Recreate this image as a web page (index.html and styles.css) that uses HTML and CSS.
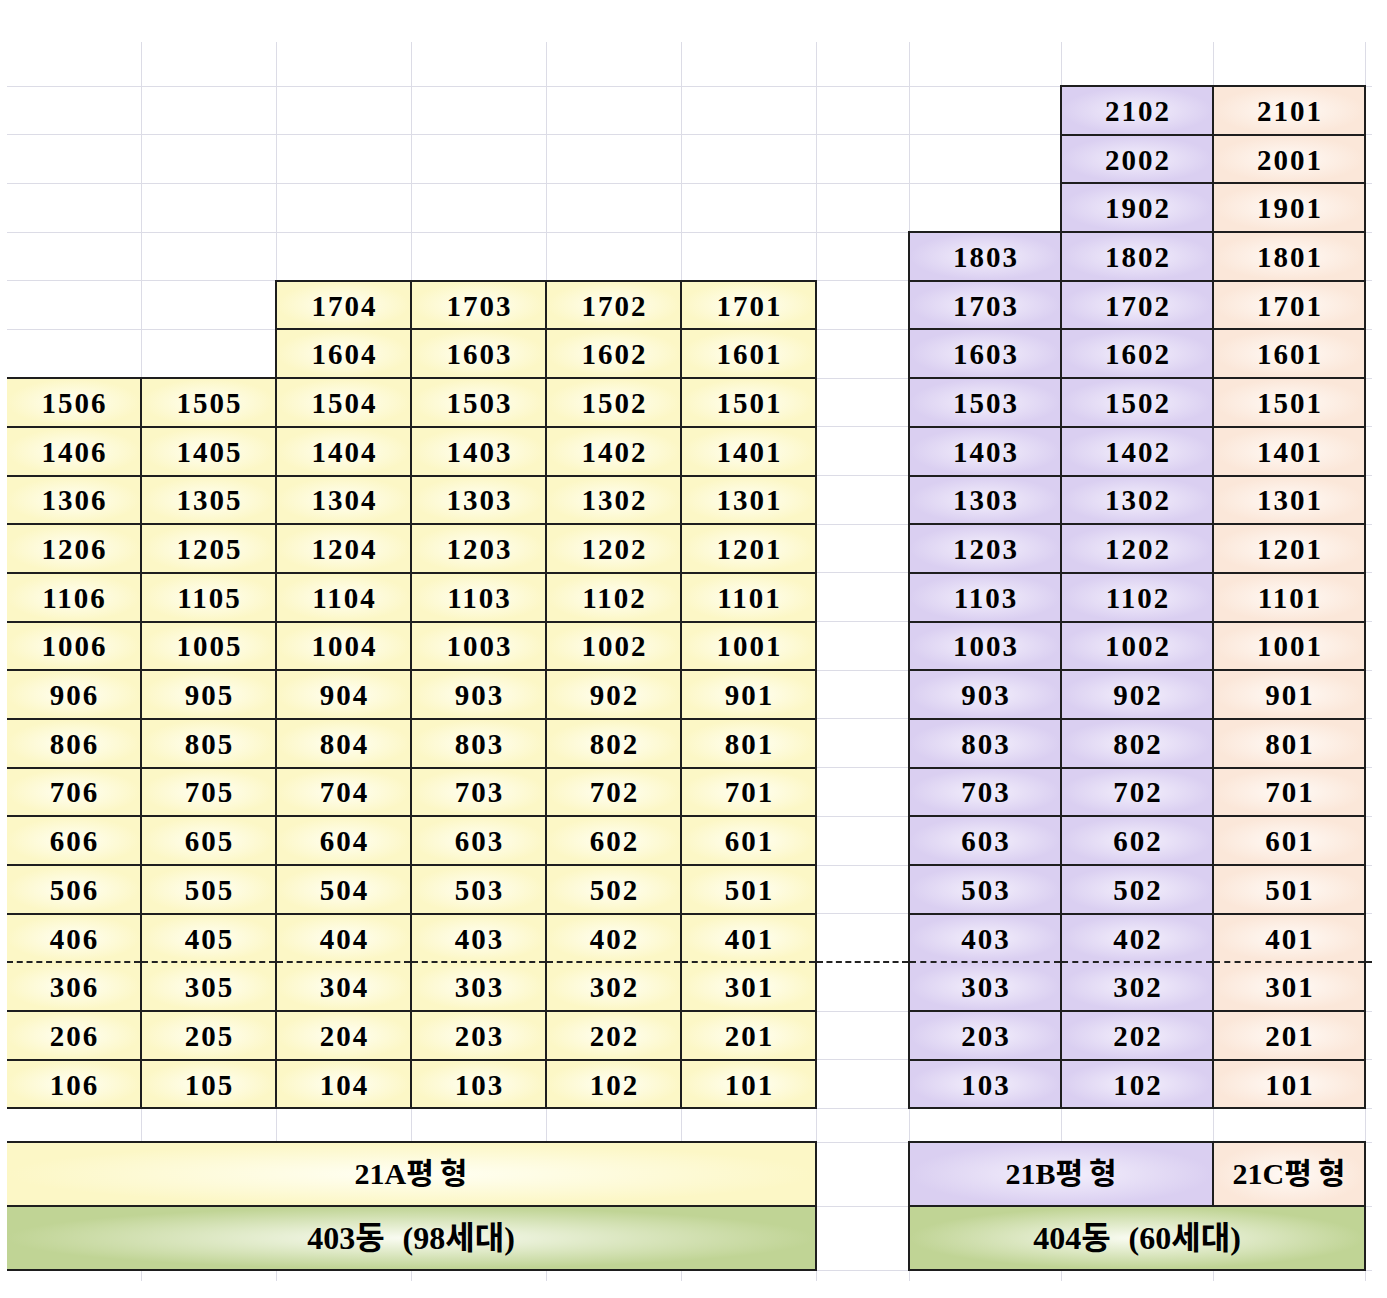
FILE: index.html
```html
<!DOCTYPE html>
<html lang="ko">
<head>
<meta charset="utf-8">
<title>403동 · 404동 세대 배치표</title>
<link rel="stylesheet" href="styles.css">
</head>
<body>
<table class="sheet">
  <colgroup>
    <col class="c134"><col class="c135"><col class="c135"><col class="c135"><col class="c135"><col class="c135">
    <col class="c93"><col class="c152"><col class="c152"><col class="c152"><col class="c7">
  </colgroup>
  <tr class="head"><td></td><td></td><td></td><td></td><td></td><td></td><td></td><td></td><td></td><td></td><td></td></tr>
  <tr class="r"><td></td><td></td><td></td><td></td><td></td><td></td><td></td><td></td><td class="p">2102</td><td class="o">2101</td><td></td></tr>
  <tr class="r"><td></td><td></td><td></td><td></td><td></td><td></td><td></td><td></td><td class="p">2002</td><td class="o">2001</td><td></td></tr>
  <tr class="r"><td></td><td></td><td></td><td></td><td></td><td></td><td></td><td></td><td class="p">1902</td><td class="o">1901</td><td></td></tr>
  <tr class="r"><td></td><td></td><td></td><td></td><td></td><td></td><td></td><td class="p">1803</td><td class="p">1802</td><td class="o">1801</td><td></td></tr>
  <tr class="r"><td></td><td></td><td class="y">1704</td><td class="y">1703</td><td class="y">1702</td><td class="y">1701</td><td></td><td class="p">1703</td><td class="p">1702</td><td class="o">1701</td><td></td></tr>
  <tr class="r"><td></td><td></td><td class="y">1604</td><td class="y">1603</td><td class="y">1602</td><td class="y">1601</td><td></td><td class="p">1603</td><td class="p">1602</td><td class="o">1601</td><td></td></tr>
  <tr class="r"><td class="y">1506</td><td class="y">1505</td><td class="y">1504</td><td class="y">1503</td><td class="y">1502</td><td class="y">1501</td><td></td><td class="p">1503</td><td class="p">1502</td><td class="o">1501</td><td></td></tr>
  <tr class="r"><td class="y">1406</td><td class="y">1405</td><td class="y">1404</td><td class="y">1403</td><td class="y">1402</td><td class="y">1401</td><td></td><td class="p">1403</td><td class="p">1402</td><td class="o">1401</td><td></td></tr>
  <tr class="r"><td class="y">1306</td><td class="y">1305</td><td class="y">1304</td><td class="y">1303</td><td class="y">1302</td><td class="y">1301</td><td></td><td class="p">1303</td><td class="p">1302</td><td class="o">1301</td><td></td></tr>
  <tr class="r"><td class="y">1206</td><td class="y">1205</td><td class="y">1204</td><td class="y">1203</td><td class="y">1202</td><td class="y">1201</td><td></td><td class="p">1203</td><td class="p">1202</td><td class="o">1201</td><td></td></tr>
  <tr class="r"><td class="y">1106</td><td class="y">1105</td><td class="y">1104</td><td class="y">1103</td><td class="y">1102</td><td class="y">1101</td><td></td><td class="p">1103</td><td class="p">1102</td><td class="o">1101</td><td></td></tr>
  <tr class="r"><td class="y">1006</td><td class="y">1005</td><td class="y">1004</td><td class="y">1003</td><td class="y">1002</td><td class="y">1001</td><td></td><td class="p">1003</td><td class="p">1002</td><td class="o">1001</td><td></td></tr>
  <tr class="r"><td class="y">906</td><td class="y">905</td><td class="y">904</td><td class="y">903</td><td class="y">902</td><td class="y">901</td><td></td><td class="p">903</td><td class="p">902</td><td class="o">901</td><td></td></tr>
  <tr class="r"><td class="y">806</td><td class="y">805</td><td class="y">804</td><td class="y">803</td><td class="y">802</td><td class="y">801</td><td></td><td class="p">803</td><td class="p">802</td><td class="o">801</td><td></td></tr>
  <tr class="r"><td class="y">706</td><td class="y">705</td><td class="y">704</td><td class="y">703</td><td class="y">702</td><td class="y">701</td><td></td><td class="p">703</td><td class="p">702</td><td class="o">701</td><td></td></tr>
  <tr class="r"><td class="y">606</td><td class="y">605</td><td class="y">604</td><td class="y">603</td><td class="y">602</td><td class="y">601</td><td></td><td class="p">603</td><td class="p">602</td><td class="o">601</td><td></td></tr>
  <tr class="r"><td class="y">506</td><td class="y">505</td><td class="y">504</td><td class="y">503</td><td class="y">502</td><td class="y">501</td><td></td><td class="p">503</td><td class="p">502</td><td class="o">501</td><td></td></tr>
  <tr class="r dash-after"><td class="y">406</td><td class="y">405</td><td class="y">404</td><td class="y">403</td><td class="y">402</td><td class="y">401</td><td></td><td class="p">403</td><td class="p">402</td><td class="o">401</td><td></td></tr>
  <tr class="r dash-before"><td class="y">306</td><td class="y">305</td><td class="y">304</td><td class="y">303</td><td class="y">302</td><td class="y">301</td><td></td><td class="p">303</td><td class="p">302</td><td class="o">301</td><td></td></tr>
  <tr class="r"><td class="y">206</td><td class="y">205</td><td class="y">204</td><td class="y">203</td><td class="y">202</td><td class="y">201</td><td></td><td class="p">203</td><td class="p">202</td><td class="o">201</td><td></td></tr>
  <tr class="r"><td class="y">106</td><td class="y">105</td><td class="y">104</td><td class="y">103</td><td class="y">102</td><td class="y">101</td><td></td><td class="p">103</td><td class="p">102</td><td class="o">101</td><td></td></tr>
  <tr class="gap"><td></td><td></td><td></td><td></td><td></td><td></td><td></td><td></td><td></td><td></td><td></td></tr>
  <tr class="lab"><td class="y label" colspan="6">21A<span class="sp">평</span>형</td><td></td><td class="p label" colspan="2">21B<span class="sp">평</span>형</td><td class="o label">21C<span class="sp">평</span>형</td><td></td></tr>
  <tr class="lab"><td class="g label wide" colspan="6">403동 (98세대)</td><td></td><td class="g label wide" colspan="3">404동 (60세대)</td><td></td></tr>
  <tr class="tail"><td></td><td></td><td></td><td></td><td></td><td></td><td></td><td></td><td></td><td></td><td></td></tr>
</table>
</body>
</html>
```

FILE: styles.css
```css
html, body {
  margin: 0;
  background: #ffffff;
}

.sheet {
  border-collapse: collapse;
  table-layout: fixed;
  width: 1365px;
  margin: 42px 0 0 7px;
}

.c134 { width: 134px; }
.c135 { width: 135px; }
.c93 { width: 93px; }
.c152 { width: 152px; }
.c7 { width: 7px; }

.sheet td {
  border: 1px solid #dcdce6;
  padding: 2px 0 0 2px;
  text-align: center;
  vertical-align: middle;
  color: #000;
  font-family: "Liberation Serif", "Noto Sans CJK KR", serif;
  font-weight: bold;
  font-size: 29px;
  letter-spacing: 2px;
  line-height: 1;
}

.sheet tr td:first-child { border-left: none; }
.sheet tr td:last-child { border-right: none; }
.sheet tr.head td { border-top: none; }
.sheet tr.tail td { border-bottom: none; }

.head { height: 44px; }
.r { height: 48.7px; }
.gap { height: 34px; }
.lab { height: 64px; }
.tail { height: 11px; }

.sheet td.y {
  border: 2px solid #1e1e1e;
  background: radial-gradient(closest-side, #fffff4 0%, #fcf7c6 100%);
}
.sheet td.p {
  border: 2px solid #1e1e1e;
  background: radial-gradient(closest-side, #f4f0fc 0%, #dacff1 100%);
}
.sheet td.o {
  border: 2px solid #1e1e1e;
  background: radial-gradient(closest-side, #fffaf6 0%, #fbe7d9 100%);
}
.sheet td.g {
  border: 2px solid #1e1e1e;
  background: radial-gradient(closest-side, #fafcf3 0%, #c0d495 100%);
}
.sheet tr td.y:first-child,
.sheet tr td.g:first-child { border-left: none; }

.sheet tr.dash-after td { border-bottom: 2px dashed #222; }
.sheet tr.dash-before td { border-top: 2px dashed #222; }

.sheet td.label {
  font-size: 30px;
  letter-spacing: 0;
  padding: 0;
}
.sheet td.label.wide {
  font-size: 32px;
  word-spacing: 10px;
  font-weight: 600;
}
.sp { margin-right: 6px; }
```
